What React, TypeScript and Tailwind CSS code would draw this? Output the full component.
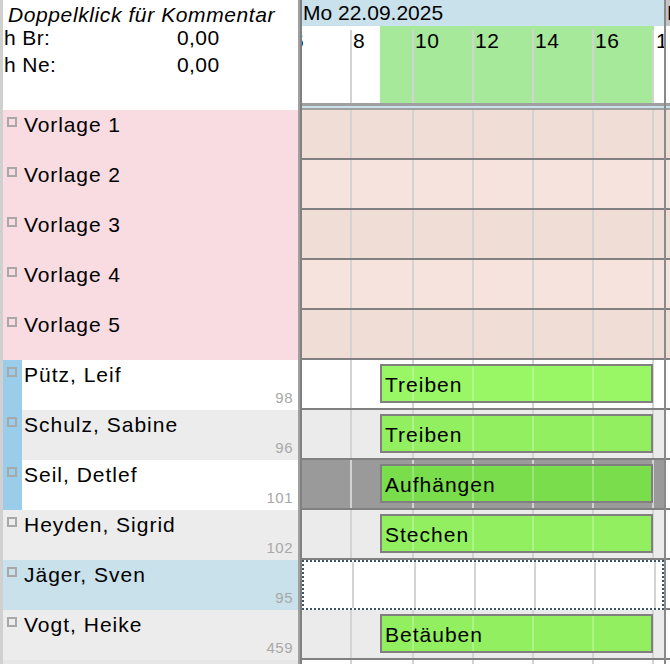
import React from "react";

const FONT = "font-['Liberation_Sans',Arial,sans-serif]";

// x of the 2-hourly grid lines inside the chart (8, 10, ... 18 o'clock)
const gridLines = [
  "left-[48px]",
  "left-[110px]",
  "left-[170px]",
  "left-[230px]",
  "left-[290px]",
  "left-[350px]",
];

// the same lines, seen from inside a bar that starts at 9 o'clock
const barLines = ["left-[30px]", "left-[90px]", "left-[150px]", "left-[210px]"];

const hourLabels = [
  { text: "6", pos: "left-[-10px]" },
  { text: "8", pos: "left-[51px]" },
  { text: "10", pos: "left-[113px]" },
  { text: "12", pos: "left-[173px]" },
  { text: "14", pos: "left-[233px]" },
  { text: "16", pos: "left-[293px]" },
  { text: "18", pos: "left-[354px]" },
];

type Variant = "white" | "gray" | "dark" | "focus";

const people: {
  name: string;
  id: string;
  task?: string;
  marked?: boolean;
  selected?: boolean;
  variant: Variant;
}[] = [
  { name: "Pütz, Leif", id: "98", task: "Treiben", marked: true, variant: "white" },
  { name: "Schulz, Sabine", id: "96", task: "Treiben", marked: true, variant: "gray" },
  { name: "Seil, Detlef", id: "101", task: "Aufhängen", marked: true, variant: "dark" },
  { name: "Heyden, Sigrid", id: "102", task: "Stechen", variant: "gray" },
  { name: "Jäger, Sven", id: "95", selected: true, variant: "focus" },
  { name: "Vogt, Heike", id: "459", task: "Betäuben", variant: "gray" },
];

const chartBg: Record<Variant, string> = {
  white: "bg-white border-b-2 border-[#808080]",
  gray: "bg-[#ebebeb] border-b-2 border-[#808080]",
  dark: "bg-[#9a9a9a] border-b-2 border-[#808080]",
  focus: "bg-white border-2 border-dotted border-[#3e5668]",
};

const barBg: Record<Variant, string> = {
  white: "bg-[#99f766]",
  gray: "bg-[#92f060]",
  dark: "bg-[#79dd4c]",
  focus: "bg-[#99f766]",
};

const Grid = ({ top = "top-0" }: { top?: string }) => (
  <>
    {gridLines.map((pos) => (
      <div key={pos} className={`absolute ${top} bottom-0 w-[2px] bg-[#d3d3d3] ${pos}`} />
    ))}
  </>
);

const Checkbox = () => (
  <span className="mt-[4px] h-[10px] w-[10px] shrink-0 border-2 border-[#a8a8a8]" />
);

const Bar = ({ label, variant }: { label: string; variant: Variant }) => (
  <div
    className={`absolute left-[78px] top-[4px] h-[39px] w-[273px] border-2 border-[#808080] pl-[3px] pt-[7px] text-[21px] leading-[24px] tracking-[1px] text-black ${barBg[variant]}`}
  >
    {barLines.map((pos) => (
      <div key={pos} className={`absolute top-0 bottom-0 w-[2px] bg-white/25 ${pos}`} />
    ))}
    <span className="relative">{label}</span>
  </div>
);

const Row = ({
  left,
  leftBg,
  chart,
  chartClass,
  nextBg,
}: {
  left: React.ReactNode;
  leftBg: string;
  chart?: React.ReactNode;
  chartClass: string;
  nextBg: string;
}) => (
  <div className="flex h-[50px]">
    <div
      className={`relative h-[50px] w-[300px] shrink-0 border-l-[3px] border-r-2 border-l-[#d0d0d0] border-r-[#a0a0a0] ${leftBg}`}
    >
      {left}
    </div>
    <div className="h-[50px] w-[364px] shrink-0 border-l-2 border-[#808080]">
      <div className={`relative h-[50px] w-[362px] overflow-hidden ${chartClass}`}>
        <Grid />
        {chart}
      </div>
    </div>
    <div className="h-[50px] w-[2px] shrink-0 bg-[#8a8a8a]" />
    <div className={`h-[50px] w-[4px] shrink-0 border-b-2 border-[#808080] ${nextBg}`} />
  </div>
);

const Header = () => (
  <div className="flex h-[110px]">
    <div className="h-[110px] w-[300px] shrink-0 border-l-[3px] border-r-2 border-l-[#d0d0d0] border-r-[#a0a0a0] bg-white">
      <div className="pl-[5px] pt-[3px] text-[21px] italic leading-[24px] tracking-[0.6px]">
        Doppelklick für Kommentar
      </div>
      <div className="mt-[-1px] grid grid-cols-[173px_auto] gap-y-[3px] pl-[1px] text-[21px] leading-[24px] tracking-[0.4px]">
        <span>h Br:</span>
        <span>0,00</span>
        <span>h Ne:</span>
        <span>0,00</span>
      </div>
    </div>
    <div className="w-[364px] shrink-0 border-l-2 border-[#808080]">
      <div className="h-[26px] bg-[#c8e1eb] pl-[1px] pt-[1px] text-[21px] leading-[24px]">
        Mo 22.09.2025
      </div>
      <div className="relative h-[77px] overflow-hidden bg-white">
        <div className="absolute left-[78px] top-0 bottom-0 w-[274px] bg-[#a7e99a]" />
        <Grid top="top-[4px]" />
        {hourLabels.map((h) => (
          <span
            key={h.text}
            className={`absolute top-[3px] text-[21px] leading-[24px] tracking-[0.5px] ${h.pos}`}
          >
            {h.text}
          </span>
        ))}
      </div>
      <div className="h-[7px] border-t-[3px] border-b-2 border-[#a0a0a0] bg-[#c8e1eb]" />
    </div>
    <div className="h-[110px] w-[2px] shrink-0 bg-[#8a8a8a]" />
    <div className="w-[4px] shrink-0 overflow-hidden">
      <div className="h-[26px] whitespace-nowrap bg-[#c4c4c4] pl-[1px] pt-[1px] text-[21px] leading-[24px]">
        Di 23.09.2025
      </div>
      <div className="h-[77px] bg-white" />
      <div className="h-[7px] border-t-[3px] border-b-2 border-[#a0a0a0] bg-[#c8e1eb]" />
    </div>
  </div>
);

export default function App() {
  const templates = [1, 2, 3, 4, 5];

  return (
    <div className={`h-[664px] w-[670px] overflow-hidden bg-white text-black ${FONT}`}>
      <Header />

      {templates.map((n, i) => (
        <Row
          key={n}
          leftBg="bg-[#f8dce1]"
          chartClass={`border-b-2 border-[#808080] ${i % 2 === 0 ? "bg-[#f0ddd6]" : "bg-[#f6e3dd]"}`}
          nextBg={i % 2 === 0 ? "bg-[#f0ddd6]" : "bg-[#f6e3dd]"}
          left={
            <div className="flex items-start pl-[4px] pt-[3px]">
              <Checkbox />
              <span className="ml-[7px] text-[21px] leading-[24px] tracking-[0.9px]">
                Vorlage {n}
              </span>
            </div>
          }
        />
      ))}

      {people.map((p, i) => {
        let leftBg = i % 2 === 0 ? "bg-white" : "bg-[#ececec]";
        if (p.selected) leftBg = "bg-[#c8e1eb]";
        if (p.marked)
          leftBg =
            i % 2 === 0
              ? "bg-[linear-gradient(to_right,#99cde9_19px,#ffffff_19px)]"
              : "bg-[linear-gradient(to_right,#99cde9_19px,#ececec_19px)]";
        return (
          <Row
            key={p.id}
            leftBg={leftBg}
            chartClass={chartBg[p.variant]}
            nextBg="bg-white"
            chart={p.task ? <Bar label={p.task} variant={p.variant} /> : null}
            left={
              <div className="flex flex-col pl-[4px] pr-[5px] pt-[3px]">
                <div className="flex items-start">
                  <Checkbox />
                  <span className="ml-[7px] text-[21px] leading-[24px] tracking-[1px]">
                    {p.name}
                  </span>
                </div>
                <div className="mt-[2px] text-right text-[15px] leading-[17px] tracking-[0.5px] text-[#a8a8a8]">
                  {p.id}
                </div>
              </div>
            }
          />
        );
      })}

      <Row leftBg="bg-[#e6e6e6]" chartClass="bg-white" nextBg="bg-white" left={null} />
    </div>
  );
}
